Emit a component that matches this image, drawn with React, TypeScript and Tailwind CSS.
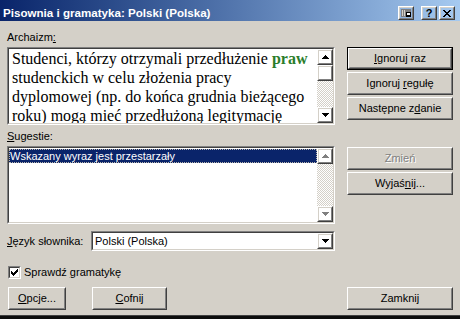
import clsx from 'clsx';
import type { ReactNode } from 'react';

// ─── Win2k bevel helpers ─────────────────────────────────────────────────────

function Raised({ className, children }: { className?: string; children?: ReactNode }) {
  return (
    <div className={clsx('border border-t-white border-l-white border-r-[#404040] border-b-[#404040]', className)}>
      <div className="flex h-full w-full items-center justify-center border border-t-[#d4d0c8] border-l-[#d4d0c8] border-r-[#808080] border-b-[#808080]">
        {children}
      </div>
    </div>
  );
}

function Sunken({ className, children }: { className?: string; children?: ReactNode }) {
  return (
    <div className={clsx('border border-t-[#808080] border-l-[#808080] border-r-white border-b-white', className)}>
      <div className="flex h-full w-full border border-t-[#404040] border-l-[#404040] border-r-[#d4d0c8] border-b-[#d4d0c8] bg-white">
        {children}
      </div>
    </div>
  );
}

function Button({
  children,
  className,
  isDefault,
  disabled,
}: {
  children: ReactNode;
  className?: string;
  isDefault?: boolean;
  disabled?: boolean;
}) {
  const label = (
    <span className={clsx(disabled && 'text-[#808080] [text-shadow:1px_1px_0_#ffffff]')}>{children}</span>
  );
  if (isDefault) {
    return (
      <div className={clsx('border border-black', className)}>
        <Raised className="h-full w-full">{label}</Raised>
      </div>
    );
  }
  return <Raised className={className}>{label}</Raised>;
}

function Arrow({ dir, disabled }: { dir: 'up' | 'down'; disabled?: boolean }) {
  const rows = dir === 'up' ? [3, 2, 1, 0] : [0, 1, 2, 3];
  const fill = disabled ? '#808080' : '#000000';
  return (
    <svg width="7" height="5" viewBox="0 0 7 5" shapeRendering="crispEdges">
      {disabled &&
        rows.map((x, y) => <rect key={'s' + y} x={x + 1} y={y + 1} width={7 - x * 2} height={1} fill="#ffffff" />)}
      {rows.map((x, y) => (
        <rect key={y} x={x} y={y} width={7 - x * 2} height={1} fill={fill} />
      ))}
    </svg>
  );
}

const track =
  'flex-1 bg-[image:repeating-conic-gradient(#d4d0c8_0%_25%,#ffffff_0%_50%)] bg-[length:2px_2px]';

function ScrollBar({ disabled }: { disabled?: boolean }) {
  return (
    <div className="flex w-[16px] flex-col">
      <Raised className="h-[16px] w-[16px]">
        <Arrow dir="up" disabled={disabled} />
      </Raised>
      {!disabled && <Raised className="h-[16px] w-[16px]" />}
      <div className={track} />
      <Raised className="h-[16px] w-[16px]">
        <Arrow dir="down" disabled={disabled} />
      </Raised>
    </div>
  );
}

function CheckMark() {
  // classic 7x7 check glyph, row by row
  const rows: [number, number][][] = [
    [[6, 1]],
    [[5, 2]],
    [[0, 1], [4, 3]],
    [[0, 2], [3, 3]],
    [[0, 5]],
    [[1, 3]],
    [[2, 1]],
  ];
  return (
    <svg width="7" height="7" viewBox="0 0 7 7" shapeRendering="crispEdges">
      {rows.map((segs, y) =>
        segs.map(([x, w], i) => <rect key={y + '-' + i} x={x} y={y} width={w} height={1} fill="#000" />)
      )}
    </svg>
  );
}

// ─── Title bar ────────────────────────────────────────────────────────────────

function TitleBar() {
  return (
    <div className="flex h-[21px] items-center bg-linear-to-r from-[#0a246a] to-[#a6caf0] pt-[5px] pl-[3px] pr-[5px]">
      <span className="flex-1 text-[11.6px] font-bold leading-[16px] text-white">
        Pisownia i gramatyka: Polski (Polska)
      </span>
      <Raised className="h-[14px] w-[16px]">
        <svg width="10" height="8" viewBox="0 0 10 8" shapeRendering="crispEdges">
          <rect x="0" y="0" width="10" height="8" fill="#808080" />
          <rect x="1" y="1" width="1" height="6" fill="#d4d0c8" />
          <rect x="3" y="1" width="1" height="6" fill="#d4d0c8" />
          <rect x="5" y="3" width="5" height="5" fill="#000" />
          <rect x="6" y="4" width="3" height="2" fill="#ffffff" />
        </svg>
      </Raised>
      <Raised className="ml-[7px] h-[14px] w-[16px]">
        <span className="text-[11px] font-bold leading-[11px] text-black">?</span>
      </Raised>
      <Raised className="ml-[2px] h-[14px] w-[16px]">
        <svg width="8" height="7" viewBox="0 0 8 7" shapeRendering="crispEdges">
          <path d="M0 0h2v1h-2zM6 0h2v1h-2zM1 1h2v1h-2zM5 1h2v1h-2zM2 2h4v1h-4zM3 3h2v1h-2zM2 4h4v1h-4zM1 5h2v1h-2zM5 5h2v1h-2zM0 6h2v1h-2zM6 6h2v1h-2z" fill="#000" />
        </svg>
      </Raised>
    </div>
  );
}

// ─── Dialog ───────────────────────────────────────────────────────────────────

export default function App() {
  return (
    <div className="flex h-[319px] w-[460px] flex-col overflow-hidden bg-[#d4d0c8] font-['Liberation_Sans',Arial,sans-serif] text-[11px] leading-[13px] text-black">
      <TitleBar />

      <div className="flex flex-1 flex-col pl-[7px] pr-[7px]">
        {/* Sentence + primary actions */}
        <div className="flex pt-[10px]">
          <div className="flex w-[328px] flex-col">
            <div className="h-[13px]">
              Archaizm<u>:</u>
            </div>
            <Sunken className="mt-[3px] h-[78px]">
              <div className="flex-1 overflow-hidden pl-[3px] font-['Liberation_Serif','Times_New_Roman',serif] text-[16px] leading-[19px]">
                <div className="whitespace-nowrap">
                  Studenci, którzy otrzymali przedłużenie{' '}
                  <span className="font-bold text-[#2b7d2b]">praw</span>
                </div>
                <div className="whitespace-nowrap">studenckich w celu złożenia pracy</div>
                <div className="whitespace-nowrap">dyplomowej (np. do końca grudnia bieżącego</div>
                <div className="whitespace-nowrap">roku) mogą mieć przedłużoną legitymację</div>
              </div>
              <ScrollBar />
            </Sunken>
          </div>
          <div className="ml-[12px] flex w-[106px] flex-col gap-[2px] pt-[16px]">
            <Button isDefault className="h-[23px]">
              <u>I</u>gnoruj raz
            </Button>
            <Button className="h-[23px]">
              Ignoruj <u>r</u>egułę
            </Button>
            <Button className="h-[23px]">
              Następne z<u>d</u>anie
            </Button>
          </div>
        </div>

        {/* Suggestions */}
        <div className="mt-[5px] h-[13px]">
          <u>S</u>ugestie:
        </div>
        <div className="mt-[3px] flex">
          <Sunken className="h-[78px] w-[328px]">
            <div className="flex-1 pt-[1px]">
              <div className="h-[14px] border border-dotted border-[#b8b4ac] bg-[#0a246a] pl-[0px] leading-[12px] text-white">
                Wskazany wyraz jest przestarzały
              </div>
            </div>
            <ScrollBar disabled />
          </Sunken>
          <div className="ml-[12px] flex w-[106px] flex-col gap-[2px] pt-[1px]">
            <Button disabled className="h-[23px]">
              Zmień
            </Button>
            <Button className="h-[23px]">
              Wyjaś<u>n</u>ij...
            </Button>
          </div>
        </div>

        {/* Dictionary language */}
        <div className="mt-[7px] flex h-[20px] items-center">
          <div className="w-[84px]">
            <u>J</u>ęzyk słownika:
          </div>
          <Sunken className="h-[20px] w-[244px]">
            <div className="flex flex-1 items-center pl-[2px]">Polski (Polska)</div>
            <Raised className="h-full w-[16px]">
              <Arrow dir="down" />
            </Raised>
          </Sunken>
        </div>

        {/* Grammar check */}
        <div className="mt-[15px] flex h-[13px] items-center pl-[1px]">
          <Sunken className="h-[13px] w-[13px]">
            <div className="flex flex-1 items-center justify-center">
              <CheckMark />
            </div>
          </Sunken>
          <span className="ml-[3px]">
            Sprawdź <u>g</u>ramatykę
          </span>
        </div>

        {/* Bottom buttons */}
        <div className="mt-[8px] flex">
          <Button className="ml-[1px] h-[23px] w-[58px]">
            <u>O</u>pcje...
          </Button>
          <Button className="ml-[26px] h-[23px] w-[75px]">
            <u>C</u>ofnij
          </Button>
          <Button className="ml-auto h-[23px] w-[106px]">Zamknij</Button>
        </div>
      </div>

      <div className="h-[4px] border-t border-[#404040] bg-[#0c0c0c]" />
    </div>
  );
}
